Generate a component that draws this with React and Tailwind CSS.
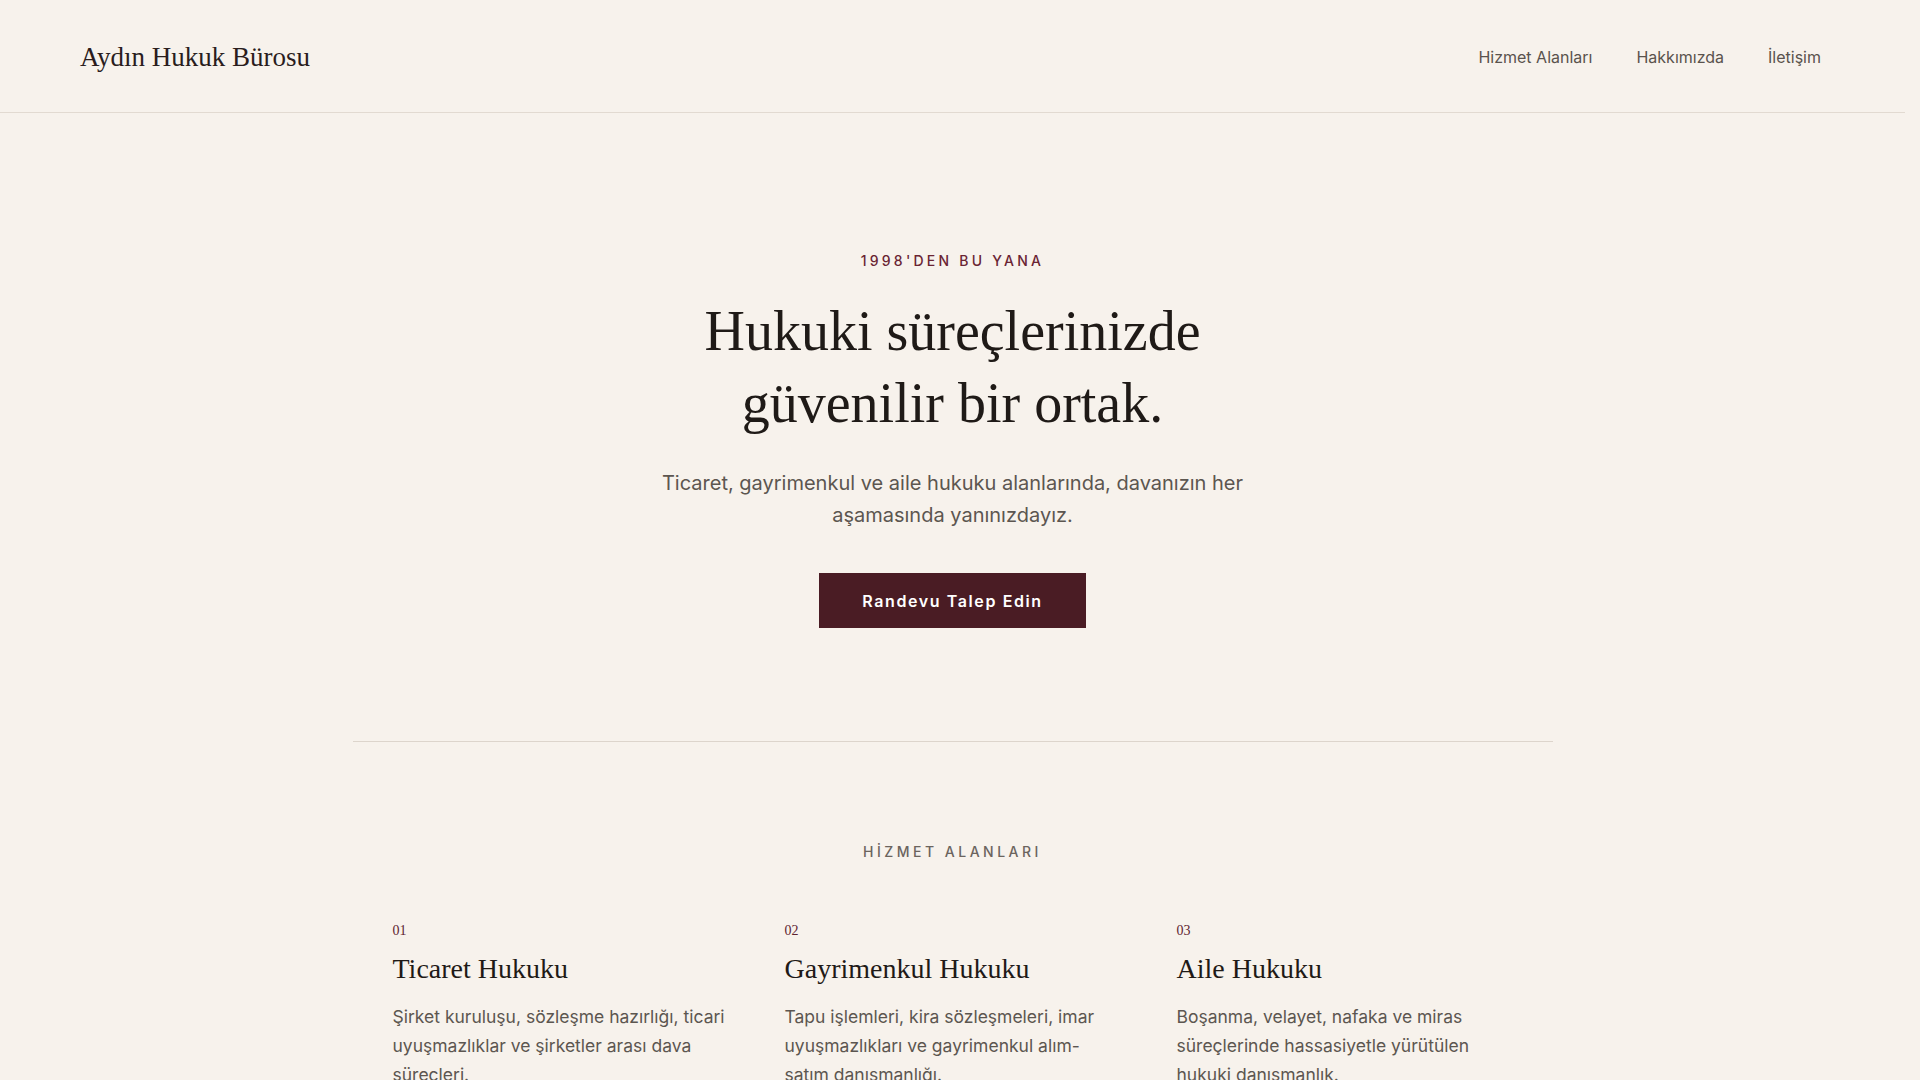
const services = [
  {
    no: "01",
    title: "Ticaret Hukuku",
    text: "Şirket kuruluşu, sözleşme hazırlığı, ticari uyuşmazlıklar ve şirketler arası dava süreçleri.",
  },
  {
    no: "02",
    title: "Gayrimenkul Hukuku",
    text: "Tapu işlemleri, kira sözleşmeleri, imar uyuşmazlıkları ve gayrimenkul alım-satım danışmanlığı.",
  },
  {
    no: "03",
    title: "Aile Hukuku",
    text: "Boşanma, velayet, nafaka ve miras süreçlerinde hassasiyetle yürütülen hukuki danışmanlık.",
  },
];

const serif = "font-['Liberation_Serif','DejaVu_Serif',serif]";
const sans = "font-['Inter','Noto_Sans',sans-serif]";

export default function App() {
  return (
    <div className={`min-h-screen bg-[#f7f2ec] text-[#1f1a17] ${sans}`}>
      <div className="w-[calc(100%-15px)]">
        {/* Header */}
        <header className="h-[113px] border-b border-[#e2dad1] pl-20 pr-[84px] flex items-center justify-between">
          <a className={`${serif} text-[27px] text-[#2a1d1d] pt-0.5`}>Aydın Hukuk Bürosu</a>
          <nav className="flex items-center gap-11 text-[16px] text-[#5a534d] pt-0.5">
            <a>Hizmet Alanları</a>
            <a>Hakkımızda</a>
            <a>İletişim</a>
          </nav>
        </header>

        {/* Hero */}
        <section className="pt-[138px] pb-[113px] flex flex-col items-center text-center">
          <p className="text-[14px] leading-5 tracking-[0.23em] font-medium text-[#6a2433]">1998'DEN BU YANA</p>
          <h1 className={`${serif} mt-6 text-[56px] leading-[72px] text-[#1f1a17]`}>
            Hukuki süreçlerinizde
            <br />
            güvenilir bir ortak.
          </h1>
          <p className="mt-7 max-w-2xl text-xl leading-8 text-[#5c5650]">
            Ticaret, gayrimenkul ve aile hukuku alanlarında, davanızın her aşamasında yanınızdayız.
          </p>
          <button className="mt-[42px] h-[55px] w-[267px] bg-[#4a1c24] text-white text-[16px] font-semibold tracking-[0.1em]">
            Randevu Talep Edin
          </button>
        </section>

        {/* Services */}
        <section className="max-w-[1200px] mx-auto border-t border-[#ddd5cc] pt-[100px] pb-24">
          <p className="text-center text-[14px] leading-5 tracking-[0.25em] font-medium text-[#6b645e]">HİZMET ALANLARI</p>
          <div className="mt-[59px] grid grid-cols-3 gap-14 px-10">
            {services.map((s) => (
              <div key={s.no}>
                <p className={`${serif} text-[14px] leading-5 text-[#5e2330]`}>{s.no}</p>
                <h3 className={`${serif} mt-2.5 text-[28px] leading-[35px] text-[#1f1a17]`}>{s.title}</h3>
                <p className="mt-4 text-[17.5px] leading-[29px] text-[#5c5650]">{s.text}</p>
              </div>
            ))}
          </div>
        </section>
      </div>
    </div>
  );
}
